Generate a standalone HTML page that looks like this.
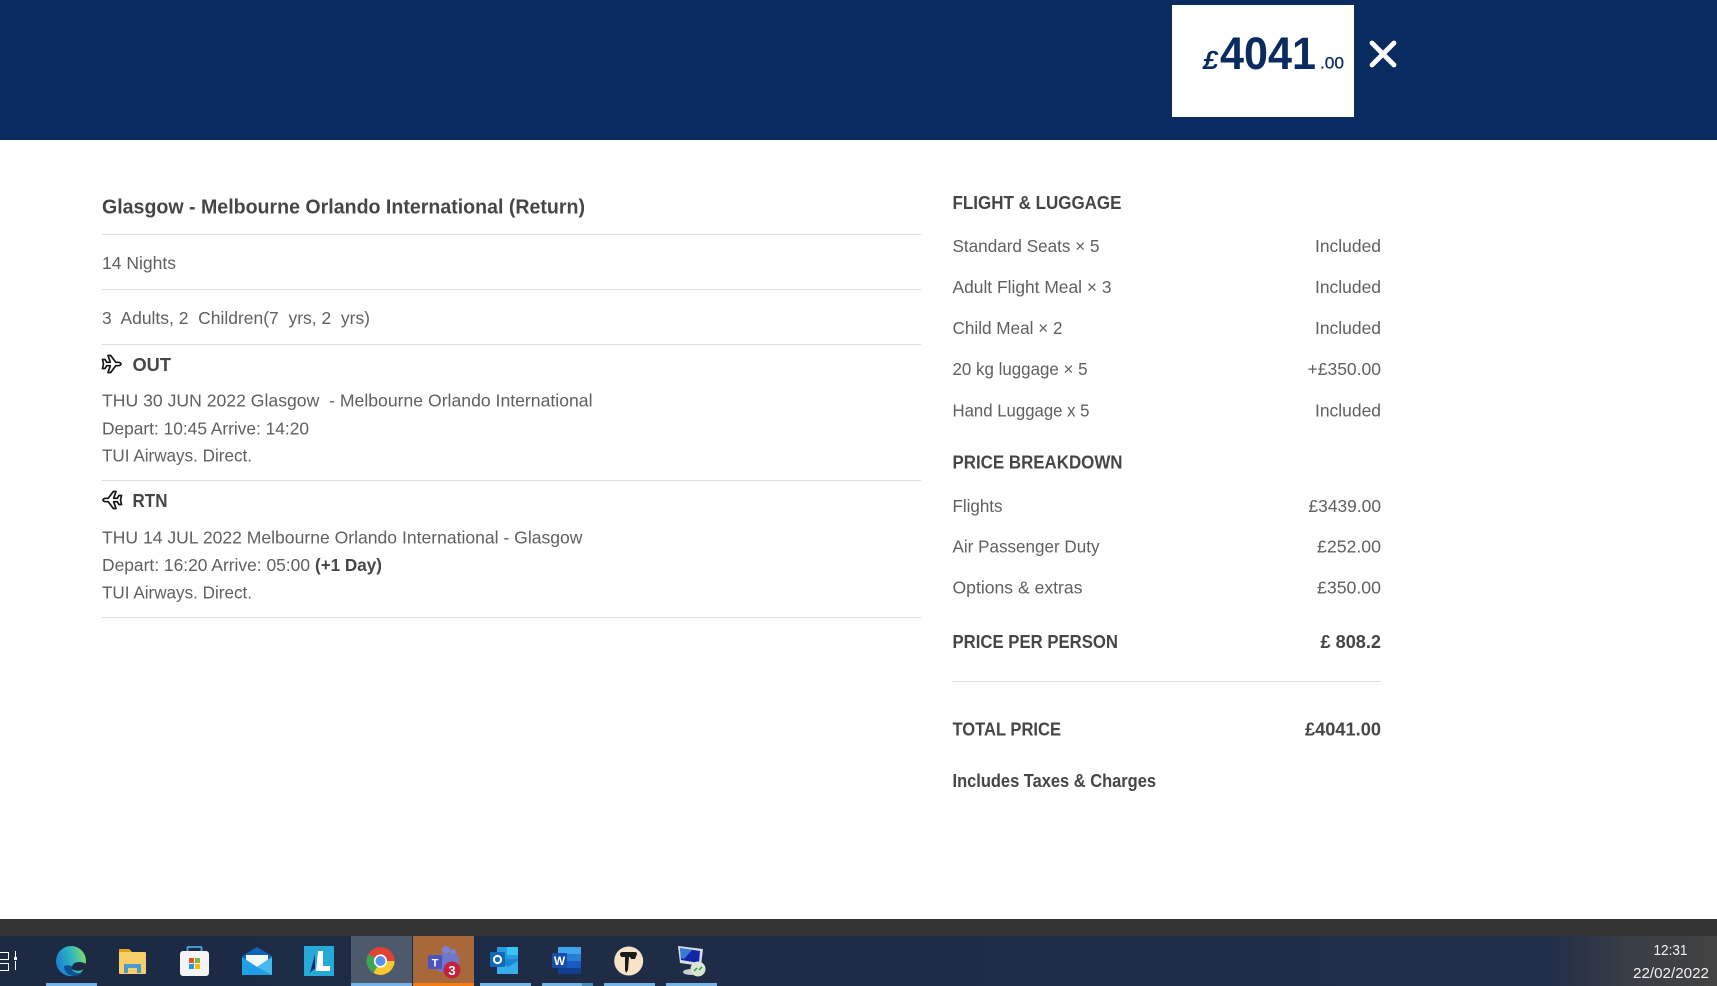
<!DOCTYPE html>
<html lang="en"><head><meta charset="utf-8"><title>Flight summary</title>
<style>
html,body{margin:0;padding:0;width:1717px;height:986px;overflow:hidden;background:#fff}
svg{display:block}
text{font-family:"Liberation Sans",sans-serif}
.b{fill:#606060;font-size:17.5px}
.h{fill:#464646;font-size:18px;font-weight:bold}
</style></head><body>
<svg width="1717" height="986" viewBox="0 0 1717 986" xmlns="http://www.w3.org/2000/svg">
<defs>
<linearGradient id="tb" x1="0" x2="1" y1="0" y2="0"><stop offset="0" stop-color="#1c2a44"/><stop offset=".9" stop-color="#202e4a"/><stop offset=".95" stop-color="#3a3e46"/><stop offset="1" stop-color="#424242"/></linearGradient>
<linearGradient id="edge" x1="0" x2="1" y1="0.6" y2="0.3"><stop offset="0" stop-color="#1a7fd4"/><stop offset=".55" stop-color="#2fb5c0"/><stop offset="1" stop-color="#86dc5c"/></linearGradient>
<path id="plane" d="M1.5 5.5h2.6l1.6 2.8h3.6L7 1.5h2.7l5 6.8h2.6c1.6 0 2.7 1 2.7 1.7s-1.1 1.7-2.7 1.7h-2.6l-5 6.8H7l2.3-6.8H5.7L4.1 14.5H1.5l1-4.5z" fill="#fff" stroke="#151515" stroke-width="1.7" stroke-linejoin="round"/>
</defs>

<!-- header -->
<rect width="1717" height="140" fill="#0a2b5f"/>
<rect x="1172" y="5" width="182" height="112" fill="#fff"/>
<text x="1203" y="69" fill="#0a2b5f" font-size="26" font-weight="bold" font-style="italic" textLength="15" lengthAdjust="spacingAndGlyphs">£</text>
<text x="1220" y="69" fill="#0a2b5f" font-size="45" font-weight="bold" textLength="96" lengthAdjust="spacingAndGlyphs">4041</text>
<text x="1320" y="68.5" fill="#0a2b5f" font-size="17" textLength="24" lengthAdjust="spacingAndGlyphs" stroke="#0a2b5f" stroke-width=".3">.00</text>
<path d="M1372 43l22 22M1394 43l-22 22" stroke="#fff" stroke-width="4.8" stroke-linecap="round"/>

<!-- left column -->
<text class="h" x="102" y="213.5" style="font-size:20px" textLength="483" lengthAdjust="spacingAndGlyphs">Glasgow - Melbourne Orlando International (Return)</text>
<g fill="#dedede">
<rect x="102" y="234" width="819" height="1"/>
<rect x="102" y="289" width="819" height="1"/>
<rect x="102" y="344" width="819" height="1"/>
<rect x="102" y="480" width="819" height="1"/>
<rect x="102" y="617" width="819" height="1"/>
<rect x="952" y="681" width="429" height="1"/>
</g>
<text class="b" x="102" y="269" textLength="74" lengthAdjust="spacingAndGlyphs">14 Nights</text>
<text class="b" x="102" y="324" xml:space="preserve" textLength="268" lengthAdjust="spacingAndGlyphs">3  Adults, 2  Children(7  yrs, 2  yrs)</text>

<use href="#plane" x="101" y="354"/>
<text class="h" x="132.5" y="371" textLength="38.5" lengthAdjust="spacingAndGlyphs">OUT</text>
<text class="b" x="102" y="406.5" xml:space="preserve" textLength="490.5" lengthAdjust="spacingAndGlyphs">THU 30 JUN 2022 Glasgow  - Melbourne Orlando International</text>
<text class="b" x="102" y="434.5" textLength="207" lengthAdjust="spacingAndGlyphs">Depart: 10:45 Arrive: 14:20</text>
<text class="b" x="102" y="461.5" textLength="150" lengthAdjust="spacingAndGlyphs">TUI Airways. Direct.</text>

<use href="#plane" transform="translate(123 490) scale(-1 1)"/>
<text class="h" x="132.5" y="507" textLength="35" lengthAdjust="spacingAndGlyphs">RTN</text>
<text class="b" x="102" y="543.5" textLength="480.5" lengthAdjust="spacingAndGlyphs">THU 14 JUL 2022 Melbourne Orlando International - Glasgow</text>
<text class="b" x="102" y="571" textLength="208" lengthAdjust="spacingAndGlyphs">Depart: 16:20 Arrive: 05:00</text>
<text class="h" x="315" y="571" style="font-size:17.5px" textLength="67" lengthAdjust="spacingAndGlyphs">(+1 Day)</text>
<text class="b" x="102" y="598.5" textLength="150" lengthAdjust="spacingAndGlyphs">TUI Airways. Direct.</text>

<!-- right column -->
<text class="h" x="952.5" y="209" textLength="169" lengthAdjust="spacingAndGlyphs">FLIGHT &amp; LUGGAGE</text>
<text class="b" x="952.5" y="252" textLength="147" lengthAdjust="spacingAndGlyphs">Standard Seats × 5</text>
<text class="b" x="1315" y="252" textLength="66" lengthAdjust="spacingAndGlyphs">Included</text>
<text class="b" x="952.5" y="293" textLength="159" lengthAdjust="spacingAndGlyphs">Adult Flight Meal × 3</text>
<text class="b" x="1315" y="293" textLength="66" lengthAdjust="spacingAndGlyphs">Included</text>
<text class="b" x="952.5" y="334" textLength="110" lengthAdjust="spacingAndGlyphs">Child Meal × 2</text>
<text class="b" x="1315" y="334" textLength="66" lengthAdjust="spacingAndGlyphs">Included</text>
<text class="b" x="952.5" y="375" textLength="135" lengthAdjust="spacingAndGlyphs">20 kg luggage × 5</text>
<text class="b" x="1307.5" y="375" textLength="73.5" lengthAdjust="spacingAndGlyphs">+£350.00</text>
<text class="b" x="952.5" y="416.5" textLength="137" lengthAdjust="spacingAndGlyphs">Hand Luggage x 5</text>
<text class="b" x="1315" y="416.5" textLength="66" lengthAdjust="spacingAndGlyphs">Included</text>

<text class="h" x="952.5" y="468.5" textLength="170" lengthAdjust="spacingAndGlyphs">PRICE BREAKDOWN</text>
<text class="b" x="952.5" y="512" textLength="50" lengthAdjust="spacingAndGlyphs">Flights</text>
<text class="b" x="1308.5" y="512" textLength="72.5" lengthAdjust="spacingAndGlyphs">£3439.00</text>
<text class="b" x="952.5" y="552.5" textLength="147" lengthAdjust="spacingAndGlyphs">Air Passenger Duty</text>
<text class="b" x="1317" y="552.5" textLength="64" lengthAdjust="spacingAndGlyphs">£252.00</text>
<text class="b" x="952.5" y="593.5" textLength="130" lengthAdjust="spacingAndGlyphs">Options &amp; extras</text>
<text class="b" x="1317" y="593.5" textLength="64" lengthAdjust="spacingAndGlyphs">£350.00</text>

<text class="h" x="952.5" y="648" textLength="165.5" lengthAdjust="spacingAndGlyphs">PRICE PER PERSON</text>
<text class="h" x="1320.5" y="648" textLength="60.5" lengthAdjust="spacingAndGlyphs">£ 808.2</text>
<text class="h" x="952.5" y="735.5" textLength="108.5" lengthAdjust="spacingAndGlyphs">TOTAL PRICE</text>
<text class="h" x="1305" y="735.5" textLength="76" lengthAdjust="spacingAndGlyphs">£4041.00</text>
<text class="h" x="952.5" y="787" textLength="203.5" lengthAdjust="spacingAndGlyphs">Includes Taxes &amp; Charges</text>

<!-- taskbar -->
<rect y="919" width="1717" height="17" fill="#333"/>
<rect y="936" width="1717" height="50" fill="url(#tb)"/>
<rect x="351" y="936" width="61" height="50" fill="#4d5a6c"/>
<rect x="413" y="936" width="61" height="50" fill="#a8693a"/>
<g fill="#76b2e6">
<rect x="46" y="983" width="51" height="3"/><rect x="351" y="983" width="61" height="3"/>
<rect x="480" y="983" width="51" height="3"/><rect x="542" y="983" width="51" height="3"/>
<rect x="604" y="983" width="51" height="3"/><rect x="666" y="983" width="51" height="3"/>
</g>
<rect x="413" y="983" width="61" height="3" fill="#f57c14"/>

<!-- task view -->
<path d="M0 952.5h8.5v7H0M0 963.5h8.5v7H0" fill="none" stroke="#fff" stroke-width="1"/>
<path d="M15.5 951v6M15.5 961v9" stroke="#fff" stroke-width="1"/><rect x="14" y="957" width="3" height="3" fill="#fff"/>

<!-- edge -->
<circle cx="71" cy="961" r="15" fill="url(#edge)"/>
<path d="M64 966q0 9 10 10q6 0 9-4q-5 2-9 0q-3-2-1-5q-4-3-9-1z" fill="#0f4f96"/>
<path d="M72 967q1-5 7-5q4 0 7 2l-2 5q-5 3-10 1q-3-1-2-3z" fill="#1c2a44"/>

<!-- folder -->
<path d="M119 950q0-1 1-1h9l3 3h13q1 0 1 1v20q0 1-1 1h-25q-1 0-1-1z" fill="#f5d06a"/>
<path d="M119 950q0-1 1-1h9l3 3h-13z" fill="#dfa31c"/>
<path d="M124 973v-8q0-1 1-1h15q1 0 1 1v8h-4v-5h-9v5z" fill="#4b9ad4"/>

<!-- store -->
<rect x="180" y="951" width="29" height="25" rx="3" fill="#f4f4f4"/>
<path d="M187.5 951v-3q0-1 1-1h12q1 0 1 1v3" fill="none" stroke="#4aa8dc" stroke-width="1.8"/>
<rect x="189" y="958" width="5" height="5" fill="#e3522b"/><rect x="195" y="958" width="5" height="5" fill="#7cb83a"/>
<rect x="189" y="964" width="5" height="5" fill="#1b9ddc"/><rect x="195" y="964" width="5" height="5" fill="#fbb811"/>

<!-- mail -->
<path d="M242 956l15-9 15 9v19h-30z" fill="#0f63b5"/>
<path d="M246 955h22v6l-11 6-11-6z" fill="#f4f7fa"/>
<path d="M242 957l15 10 15-10v18h-30z" fill="#1f9fe4"/>
<path d="M257 967l15-10v18z" fill="#46b8ee"/>

<!-- L -->
<rect x="304" y="946" width="30" height="30" fill="#25aad8"/>
<path d="M316 971l2-20h5v15h7v5z" fill="#fff"/>
<path d="M310 973l5-19v15h-1z" fill="#0b2a6e"/>

<!-- chrome -->
<circle cx="380.5" cy="961" r="14" fill="#e34133"/>
<path d="M380.5 961l-7 12a14 14 0 0 1-5-19z" fill="#3ba654"/>
<path d="M380.5 961h14a14 14 0 0 1-21 12z" fill="#f8c92e"/>
<circle cx="380.5" cy="961" r="6.6" fill="#fff"/><circle cx="380.5" cy="961" r="5" fill="#5a92ea"/>

<!-- teams -->
<circle cx="453" cy="952" r="3" fill="#7b83d6"/><circle cx="446" cy="950" r="4" fill="#7b83d6"/>
<rect x="437" y="954" width="22" height="18" rx="4" fill="#6f78cd"/>
<rect x="428" y="955" width="14" height="14" rx="1.5" fill="#4b53bc"/>
<text x="435" y="966.5" fill="#fff" font-size="11" font-weight="bold" text-anchor="middle">T</text>
<circle cx="452" cy="970" r="8.5" fill="#c4213f"/>
<text x="452" y="975" fill="#fff" font-size="13" font-weight="bold" text-anchor="middle">3</text>

<!-- outlook -->
<rect x="497" y="947" width="21" height="14" fill="#2a9be0"/>
<rect x="507" y="947" width="11" height="8" fill="#35c8f4"/>
<path d="M497 959h21v13q0 2-2 2h-19z" fill="#1b86d2"/>
<path d="M497 961l11 6 10-6v13h-21z" fill="#35aeea"/>
<rect x="490" y="952" width="15" height="15" rx="1" fill="#1268b8"/>
<circle cx="497.5" cy="959.5" r="3.6" fill="none" stroke="#fff" stroke-width="2"/>

<!-- word -->
<rect x="558" y="947" width="23" height="27" rx="1" fill="#2b7cd3"/>
<rect x="558" y="947" width="23" height="7" fill="#41a5ee"/>
<rect x="558" y="961" width="23" height="7" fill="#185abd"/>
<rect x="558" y="968" width="23" height="6" fill="#103f91"/>
<rect x="552" y="953" width="15" height="15" rx="1" fill="#144ea8"/>
<text x="559.5" y="965" fill="#fff" font-size="12" font-weight="bold" text-anchor="middle">W</text>
<rect x="582" y="983" width="11" height="3" fill="#4d87b7"/>

<!-- T circle -->
<circle cx="628.7" cy="961" r="14.5" fill="#f6e3c8"/>
<path d="M620 953q1-1 3-1h12q2 0 2 2l-2 5h-4l-1-2h-1l-1 13-2 3-1-3v-13h-3q-2 0-2-4z" fill="#1a1a1a"/>

<!-- remote desktop -->
<path d="M678 946l25 3-2 17-21-3z" fill="#d7dde6"/>
<path d="M680 948l20 3-1 12-18-3z" fill="#1426a8"/>
<path d="M680 948l12 2-8 9-3-1z" fill="#3b7bd8"/>
<ellipse cx="691" cy="972" rx="8" ry="3" fill="#c9ced4"/>
<circle cx="698" cy="969" r="7.5" fill="#d8e6d6"/>
<path d="M694 971l3-3M702 967l-3 3" stroke="#3a9a3c" stroke-width="1.5"/>

<!-- clock -->
<text x="1670.5" y="955" fill="#f2f2f2" font-size="14.5" text-anchor="middle" textLength="34" lengthAdjust="spacingAndGlyphs">12:31</text>
<text x="1633" y="978" fill="#f2f2f2" font-size="14.5" textLength="76" lengthAdjust="spacingAndGlyphs">22/02/2022</text>
</svg>
</body></html>
